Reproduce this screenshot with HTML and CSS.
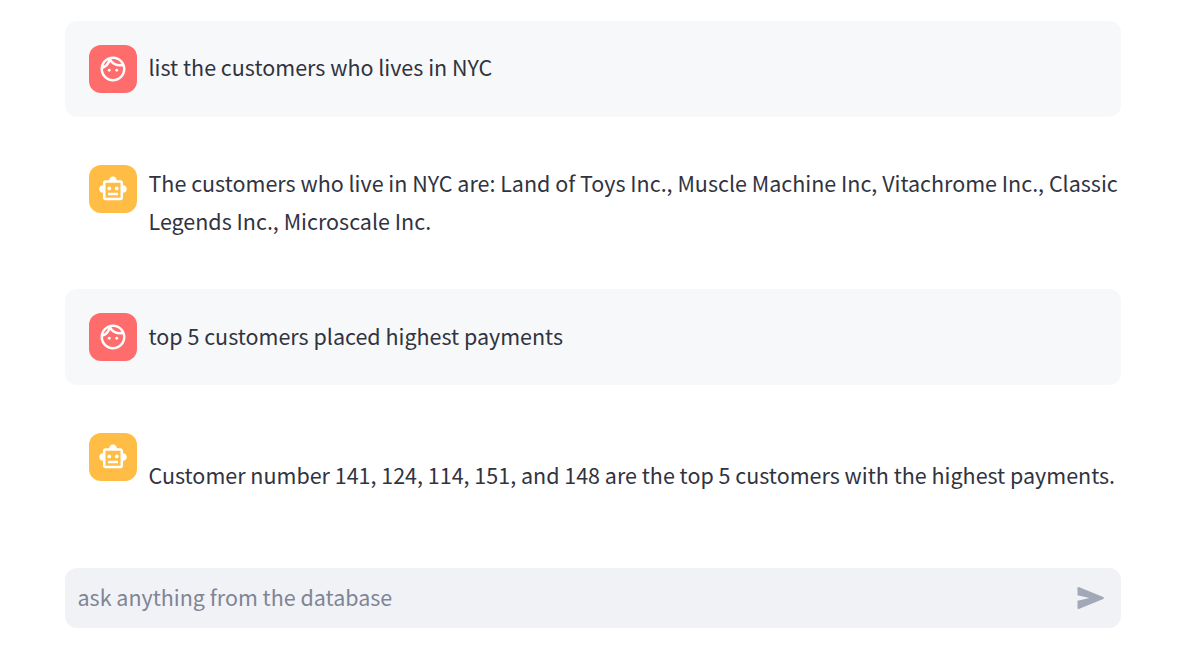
FILE: index.html
```html
<!DOCTYPE html>
<html lang="en">
<head>
<meta charset="utf-8">
<title>Chat</title>
<link rel="stylesheet" href="styles.css">
</head>
<body>
<svg class="sprite" width="0" height="0">
  <symbol id="face" viewBox="0 0 24 24"><circle cx="9" cy="13" r="1.15"/><circle cx="15" cy="13" r="1.15"/><path fill-rule="evenodd" d="M22 12c0 5.52-4.48 10-10 10S2 17.52 2 12 6.48 2 12 2s10 4.48 10 10zM10.66 4.12C12.06 6.44 14.6 8 17.5 8c.46 0 .91-.05 1.34-.12C17.44 5.56 14.9 4 12 4c-.46 0-.91.05-1.34.12zM4.42 9.47c1.71-.97 3.03-2.55 3.66-4.44C6.37 6 5.05 7.58 4.42 9.47zM20 12c0-.78-.12-1.53-.33-2.24-.7.15-1.42.24-2.17.24-3.13 0-5.92-1.44-7.76-3.69C8.69 8.87 6.6 10.88 4 11.86c.01.04 0 .09 0 .14 0 4.41 3.59 8 8 8s8-3.59 8-8z"/></symbol>
  <symbol id="robot" viewBox="0 0 24 24"><path fill-rule="evenodd" d="M20 9V7c0-1.1-.9-2-2-2h-3c0-1.66-1.34-3-3-3S9 3.34 9 5H6c-1.1 0-2 .9-2 2v2c-1.66 0-3 1.34-3 3s1.34 3 3 3v4c0 1.1.9 2 2 2h12c1.1 0 2-.9 2-2v-4c1.66 0 3-1.34 3-3s-1.34-3-3-3zm-2 10H6V7h12v12z"/><circle cx="9" cy="11.5" r="1.5"/><circle cx="15" cy="11.5" r="1.5"/><path d="M8 15h8v2H8z"/></symbol>
</svg>
<main class="chat">
  <section class="message user">
    <div class="avatar"><svg><use href="#face"/></svg></div>
    <p class="text">list the customers who lives in NYC</p>
  </section>
  <section class="message bot">
    <div class="avatar"><svg><use href="#robot"/></svg></div>
    <p class="text">The customers who live in NYC are: Land of Toys Inc., Muscle Machine Inc, Vitachrome Inc., Classic<br>Legends Inc., Microscale Inc.</p>
  </section>
  <section class="message user followup">
    <div class="avatar"><svg><use href="#face"/></svg></div>
    <p class="text">top 5 customers placed highest payments</p>
  </section>
  <section class="message bot last">
    <div class="avatar"><svg><use href="#robot"/></svg></div>
    <p class="text">Customer number 141, 124, 114, 151, and 148 are the top 5 customers with the highest payments.</p>
  </section>
  <div class="composer">
    <span class="placeholder">ask anything from the database</span>
    <svg class="send" viewBox="0 0 28 24"><path d="M1.7 1 L26.2 11 Q28 12 26.2 13 L1.7 23 Q0.5 23.2 0.5 22 V14.8 L12.5 12 L0.5 9.2 V2 Q0.5 .8 1.7 1z"/></svg>
  </div>
</main>
</body>
</html>
```
FILE: styles.css
```css
* { box-sizing: border-box; }
body {
  margin: 0;
  background: #fff;
  color: #31333f;
  font: 21.49px/38px "Noto Sans CJK SC", "Noto Sans", sans-serif;
}
.sprite { display: block; }
.chat {
  width: 1056px;
  margin-left: 65px;
  padding-top: 21px;
  display: flex;
  flex-direction: column;
}
.message {
  display: flex;
  gap: 11.5px;
  padding: 24px 0 24px 24px;
  border-radius: 12px;
}
.user { height: 96px; background: #f7f8fa; }
.bot { height: 124px; margin: 24px 0; }
.last { height: 135px; margin-bottom: 24px; }
.avatar {
  flex: none;
  width: 48px;
  height: 48px;
  border-radius: 12px;
  display: grid;
  place-items: center;
  fill: #fff;
}
.avatar svg { width: 30px; height: 30px; }
.user .avatar { background: #ff6c6c; }
.bot .avatar { background: #ffbd45; }
.text { margin: -1px 0 0; white-space: nowrap; }
.user .text { padding-top: 4px; }
.followup .text { padding-top: 5px; }
.last .text { padding-top: 24px; }
.composer {
  height: 60px;
  padding: 0 16px 0 12.5px;
  border-radius: 12px;
  background: #f0f2f6;
  display: flex;
  align-items: center;
  justify-content: space-between;
  color: #808495;
}
.placeholder { padding-bottom: 2px; }
.placeholder { display: block; }
.send { width: 28px; height: 24px; fill: #a3a8b8; }
```
